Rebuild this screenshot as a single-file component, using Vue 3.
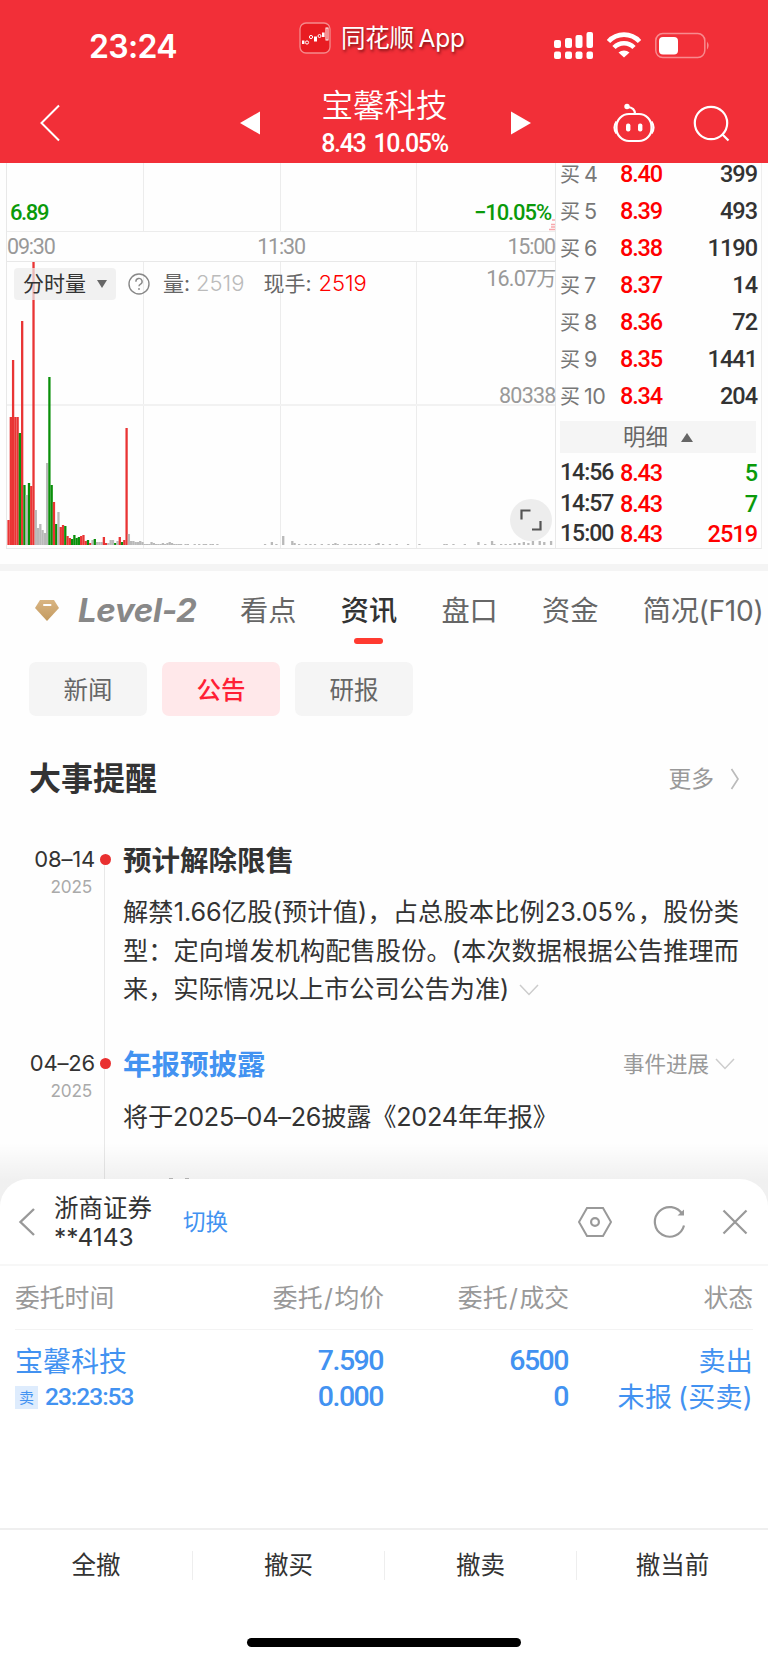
<script setup>
const bids = [
  { level: 4, price: '8.40', qty: 399 },
  { level: 5, price: '8.39', qty: 493 },
  { level: 6, price: '8.38', qty: 1190 },
  { level: 7, price: '8.37', qty: 14 },
  { level: 8, price: '8.36', qty: 72 },
  { level: 9, price: '8.35', qty: 1441 },
  { level: 10, price: '8.34', qty: 204 },
]

const ticks = [
  { time: '14:56', price: '8.43', qty: 5, side: 'down' },
  { time: '14:57', price: '8.43', qty: 7, side: 'down' },
  { time: '15:00', price: '8.43', qty: 2519, side: 'up' },
]

// minute volume: colour letter (r / g / n) + bar height
const head = (
  'r25 r128 r185 r128 r128 g112 r224 g60 n50 g62 r59 r283 n35 n17 n21 n15 n12 n82 g168 g60 ' +
  'r43 g21 n33 r18 r20 g19 r9 r7 g6 g10 g7 g8 r9 r10 r4 g5 r2 n5 g6 n3 n3 n3 r8 r2 n2 n5 n5 ' +
  'g2 n4 r8 g3 r5 r117 n11 n4 n4 n3 n3 n4 n3 n1 n1 n1 n3 n2 n1 n1 n1 n2 n1 n2 n3 n2 n1 n1 n1 n1 ' +
  'n0 n1 n1 n0 n0 n1 n0 n1 n0 n1 n1 n0 n1 n1 n0 n1'
).split(' ').map((s, i) => ({ i, c: s[0], h: +s.slice(1) }))
const tail = [
  [113, 1], [116, 3], [118, 1], [121, 9], [125, 4], [126, 2], [128, 1], [131, 1], [133, 1], [135, 1], [138, 1],
  [141, 1], [143, 1], [144, 2], [145, 1], [148, 1], [150, 1], [151, 1], [153, 1], [155, 1], [157, 1], [159, 1],
  [162, 1], [163, 2], [165, 1], [168, 1], [171, 1], [176, 1], [181, 1], [192, 1], [193, 1], [196, 1], [201, 1],
  [207, 3], [210, 1], [213, 4], [214, 1], [217, 1], [219, 1], [221, 1], [223, 2], [225, 2], [227, 3], [229, 2],
  [231, 4], [234, 4], [236, 3], [239, 4],
].map(([i, h]) => ({ i, c: 'n', h }))
const bars = [...head, ...tail]
const barColor = { r: '#e93434', g: '#0a8f0a', n: '#b9b9b9' }

const tabs = ['看点', '资讯', '盘口', '资金', '简况(F10)']
const pills = ['新闻', '公告', '研报']
const actions = ['全撤', '撤买', '撤卖', '撤当前']
</script>

<template>
  <div class="screen">
    <header class="header">
      <div class="status">
        <span class="clock">23:24</span>
        <div class="app">
          <svg class="app-icon" width="32" height="32" viewBox="0 0 32 32">
            <rect x="1" y="1" width="30" height="30" rx="6" fill="#e81c22" stroke="#f58a8c" stroke-width="1.3" />
            <g fill="#fff">
              <rect x="3" y="18.5" width="2.4" height="3.5" />
              <rect x="15" y="14.5" width="3" height="5" />
              <rect x="23" y="10.5" width="2.6" height="4.5" />
            </g>
            <g fill="none" stroke="#fff" stroke-width="1">
              <circle cx="8" cy="20.5" r="1.6" />
              <circle cx="12" cy="15" r="1.6" />
              <circle cx="20.5" cy="14" r="1.5" />
              <rect x="27" y="6" width="2" height="12" />
            </g>
          </svg>
          <span class="app-name">同花顺 App</span>
        </div>
        <svg class="sys" width="160" height="30" viewBox="0 0 160 30">
          <g fill="#fff">
            <rect x="3" y="10" width="7" height="8" rx="2" />
            <rect x="14" y="8" width="7" height="10" rx="2" />
            <rect x="24.500" y="5" width="7" height="13" rx="2" />
            <rect x="35.500" y="2" width="6.500" height="16" rx="2" />
            <rect x="3" y="21.500" width="7" height="7.500" rx="2" />
            <rect x="14" y="21.500" width="7" height="7.500" rx="2" />
            <rect x="24.500" y="21.500" width="7" height="7.500" rx="2" />
            <rect x="35.500" y="21.500" width="6.500" height="7.500" rx="2" />
          </g>
          <g fill="none" stroke="#fff" stroke-width="4.600">
            <path d="M57.500 11.500 A21 21 0 0 1 88.500 11.500" />
            <path d="M63 17.500 A14 14 0 0 1 83 17.500" />
          </g>
          <path d="M67.500 22.500 A8.500 8.500 0 0 1 78.500 22.500 L73 27.500 Z" fill="#fff" />
          <rect x="104.800" y="3.600" width="49" height="24" rx="7" fill="none" stroke="#f88a8e" stroke-width="1.500" />
          <rect x="108" y="7" width="19" height="17.500" rx="4" fill="#fff" />
          <path d="M156 11.500 q3.200 4 0 8 z" fill="#f88a8e" />
        </svg>
      </div>
      <div class="nav">
        <svg class="nav-back" width="22" height="38" viewBox="0 0 22 38">
          <path d="M20 1.500 L2.500 19 L20 36.500" fill="none" stroke="#fff" stroke-width="2" />
        </svg>
        <svg class="nav-prev" width="20" height="24" viewBox="0 0 20 24"><path d="M0 12 L20 0.500 V23.500 Z" fill="#fff" /></svg>
        <div class="nav-title">
          <div class="stock-name">宝馨科技</div>
          <div class="stock-price num">8.43 10.05%</div>
        </div>
        <svg class="nav-next" width="20" height="24" viewBox="0 0 20 24"><path d="M20 12 L0 0.500 V23.500 Z" fill="#fff" /></svg>
        <svg class="nav-bot" width="42" height="40" viewBox="0 0 42 40">
          <g fill="none" stroke="#fff" stroke-width="2.200">
            <rect x="3.500" y="11" width="35" height="27" rx="12.500" />
            <path d="M3.500 18.500 Q-0.500 24.500 3.500 30.500 M38.500 18.500 Q42.500 24.500 38.500 30.500" />
            <path d="M22 11 Q22 4.500 14.500 4" />
          </g>
          <circle cx="14" cy="3.500" r="2.700" fill="#fff" />
          <rect x="13" y="20.500" width="4.400" height="8" rx="2" fill="#fff" />
          <rect x="25" y="20.500" width="4.400" height="8" rx="2" fill="#fff" />
        </svg>
        <svg class="nav-search" width="38" height="38" viewBox="0 0 38 38">
          <circle cx="18" cy="18" r="16.200" fill="none" stroke="#fff" stroke-width="2.200" />
          <path d="M29 29 L35.500 35.500" stroke="#fff" stroke-width="2.200" />
        </svg>
      </div>
    </header>

    <section class="quote">
      <div class="chart">
        <div class="price-pane">
          <div class="cols"><i /><i /><i /><i /></div>
          <div class="pane-row num">
            <span>6.89</span>
            <span class="pct">−10.05%</span>
          </div>
          <svg class="edge" width="6" height="12" viewBox="0 0 6 12">
            <path d="M3 1H6 M2 5.500H6 M2 8H6 M0 10.500H6" stroke="#f7a8ac" stroke-width="1.300" />
          </svg>
        </div>
        <div class="axis num"><span>09:30</span><span>11:30</span><span>15:00</span></div>
        <div class="vol-pane">
          <div class="cols"><i /><i /><i /><i /></div>
          <div class="mid" />
          <svg class="bars" width="547" height="284" viewBox="0 0 547 284">
            <rect
              v-for="b in bars"
              :key="b.i"
              :x="0.4 + b.i * 2.27"
              :y="284 - b.h"
              width="2.3"
              :height="b.h"
              :fill="barColor[b.c]"
            />
          </svg>
          <div class="vol-head">
            <div class="vol-select">分时量<i class="caret-down" /></div>
            <svg class="help" width="22" height="22" viewBox="0 0 22 22">
              <circle cx="11" cy="11" r="10" fill="none" stroke="#888" stroke-width="1.400" />
              <path d="M7.900 8.700 A3.100 3.100 0 1 1 12.300 11.300 Q11 12 11 13.300" fill="none" stroke="#888" stroke-width="1.400" />
              <circle cx="11" cy="16" r="0.900" fill="#888" />
            </svg>
            <span class="vol-item">量: <em class="muted">2519</em></span>
            <span class="vol-item now">现手: <em class="red">2519</em></span>
          </div>
          <span class="scale-top num">16.07<b>万</b></span>
          <span class="scale-mid num">80338</span>
          <div class="expand">
            <svg width="22" height="22" viewBox="0 0 22 22">
              <path d="M1.500 10.500 V1.500 H10.500 M20.500 12 V20.500 H12" fill="none" stroke="#555" stroke-width="2.200" />
            </svg>
          </div>
        </div>
      </div>
      <div class="book">
        <div v-for="b in bids" :key="b.level" class="bid">
          <span class="bid-label">买<span>{{ b.level }}</span></span>
          <span class="bid-price num">{{ b.price }}</span>
          <span class="bid-qty num">{{ b.qty }}</span>
        </div>
        <div class="detail-head">明细<i class="caret-up" /></div>
        <div v-for="t in ticks" :key="t.time" class="tick num">
          <span class="tick-time">{{ t.time }}</span>
          <span class="bid-price">{{ t.price }}</span>
          <span class="bid-qty" :class="t.side">{{ t.qty }}</span>
        </div>
      </div>
    </section>

    <nav class="tabs">
      <svg class="gem" width="24" height="23" viewBox="0 0 24 23">
        <defs>
          <linearGradient id="gold" x1="0" y1="0" x2="0" y2="1">
            <stop offset="0" stop-color="#d9b583" /><stop offset="1" stop-color="#c39a5f" />
          </linearGradient>
        </defs>
        <path d="M5 1 H19 L24 9 L12 22 L0 9 Z" fill="url(#gold)" />
        <rect x="8" y="5" width="8.500" height="2" rx="1" fill="#fff" />
      </svg>
      <span class="level2">Level-2</span>
      <span v-for="t in tabs" :key="t" class="tab" :class="{ active: t === '资讯' }">{{ t }}</span>
    </nav>

    <div class="pills">
      <span v-for="p in pills" :key="p" class="pill" :class="{ active: p === '公告' }">{{ p }}</span>
    </div>

    <div class="section-head">
      <h2>大事提醒</h2>
      <span class="more">更多
        <svg width="10" height="22" viewBox="0 0 10 22"><path d="M1.500 1 L8 11 L1.500 21" fill="none" stroke="#bbb" stroke-width="1.700" /></svg>
      </span>
    </div>

    <section class="timeline">
      <article class="event first">
        <div class="when"><div class="day">08–14</div><div class="year">2025</div></div>
        <div class="rail"><i class="dot" /></div>
        <div class="what">
          <div class="event-head"><h3>预计解除限售</h3></div>
          <p class="full">解禁1.66亿股(预计值)，占总股本比例23.05%，股份类</p>
          <p class="full">型：定向增发机构配售股份。(本次数据根据公告推理而</p>
          <p>来，实际情况以上市公司公告为准)<svg class="chev" width="20" height="12" viewBox="0 0 20 12"><path d="M1 1 L10 10.500 L19 1" fill="none" stroke="#ccc" stroke-width="1.500" /></svg></p>
        </div>
      </article>
      <article class="event">
        <div class="when"><div class="day">04–26</div><div class="year">2025</div></div>
        <div class="rail"><i class="dot" /></div>
        <div class="what">
          <div class="event-head">
            <h3 class="link">年报预披露</h3>
            <span class="progress">事件进展<svg width="20" height="12" viewBox="0 0 20 12"><path d="M1 1 L10 10.500 L19 1" fill="none" stroke="#ccc" stroke-width="1.500" /></svg></span>
          </div>
          <p class="tight">将于2025–04–26披露《2024年年报》</p>
          <div class="peek"><i /><i /></div>
        </div>
      </article>
      <div class="fade" />
    </section>

    <section class="sheet">
      <div class="sheet-head">
        <svg width="18" height="30" viewBox="0 0 18 30"><path d="M16 2 L2.500 15 L16 28" fill="none" stroke="#999" stroke-width="2.400" /></svg>
        <div class="broker"><div>浙商证券</div><div>**4143</div></div>
        <span class="switch">切换</span>
        <div class="tools">
          <svg width="34" height="32" viewBox="0 0 34 32">
            <path d="M9 2 H25 L33 16 L25 30 H9 L1 16 Z" fill="none" stroke="#999" stroke-width="2" />
            <circle cx="17" cy="16" r="3.900" fill="none" stroke="#999" stroke-width="2.200" />
          </svg>
          <svg width="34" height="34" viewBox="0 0 34 34">
            <path d="M31 20.500 A14.800 14.800 0 1 1 29.500 9.500" fill="none" stroke="#999" stroke-width="2.200" />
            <path d="M31 4.500 V10.500 H24.500 Z" fill="#999" />
          </svg>
          <svg width="26" height="26" viewBox="0 0 26 26"><path d="M1.500 1.500 L24.500 24.500 M24.500 1.500 L1.500 24.500" stroke="#999" stroke-width="2.200" /></svg>
        </div>
      </div>
      <div class="orders">
        <div class="order-row order-head"><span>委托时间</span><span>委托<i>/</i>均价</span><span>委托<i>/</i>成交</span><span>状态</span></div>
        <div class="order-row order">
          <div>
            <div class="name">宝馨科技</div>
            <div class="sub"><span class="badge">卖</span><span class="time num">23:23:53</span></div>
          </div>
          <div class="num big"><div>7.590</div><div>0.000</div></div>
          <div class="num big"><div>6500</div><div>0</div></div>
          <div class="state"><div>卖出</div><div>未报 (买卖)</div></div>
        </div>
      </div>
      <div class="actions">
        <span v-for="a in actions" :key="a">{{ a }}</span>
      </div>
      <div class="home" />
    </section>
  </div>
</template>

<style>
body {
  margin: 0;
  background: #fefefe;
}
</style>

<style scoped>
.screen {
  width: 768px;
  height: 1662px;
  overflow: hidden;
  display: flex;
  flex-direction: column;
  background: #fefefe;
  color: #333;
  font-family: Inter, "Noto Sans CJK SC", sans-serif;
  font-size: 24px;
}
.screen * {
  box-sizing: border-box;
}
svg {
  display: block;
  flex-shrink: 0;
}
.num {
  font-family: Roboto, "Noto Sans CJK SC", sans-serif;
  font-weight: 500;
}

/* header */
.header {
  height: 163px;
  flex-shrink: 0;
  background: #f22f38;
  color: #fff;
}
.status {
  height: 80px;
  display: flex;
}
.clock {
  width: 299px;
  padding: 27px 0 0 89px;
  font-size: 32px;
  line-height: 40px;
  font-weight: 600;
  letter-spacing: -0.7px;
}
.app {
  display: flex;
  margin-top: 22px;
  height: 32px;
  width: 252px;
  gap: 10px;
}
.app-name {
  font-size: 24.500px;
  line-height: 33px;
  letter-spacing: -0.2px;
  word-spacing: -2px;
  text-shadow: 1px 2px 3px rgba(60, 0, 0, 0.65);
  white-space: nowrap;
}
.sys {
  margin-top: 30px;
}
.nav {
  height: 83px;
  display: flex;
  align-items: flex-start;
}
.nav-back {
  margin: 24px 0 0 39px;
}
.nav-prev {
  margin: 31px 0 0 179px;
}
.nav-title {
  width: 251px;
  padding-right: 2px;
  text-align: center;
  white-space: nowrap;
}
.stock-name {
  margin-top: 6px;
  font-size: 31.500px;
  line-height: 40px;
  font-weight: 350;
}
.stock-price {
  font-size: 25px;
  line-height: 36px;
  letter-spacing: -1.3px;
  word-spacing: 3px;
}
.nav-next {
  margin-top: 31px;
}
.nav-bot {
  margin: 23px 0 0 82px;
}
.nav-search {
  margin: 25px 0 0 38px;
}

/* quote */
.quote {
  height: 408px;
  flex-shrink: 0;
  display: flex;
  padding-left: 6px;
  border-bottom: 7px solid #f4f4f4;
}
.chart {
  width: 550px;
  height: 386px;
  border-left: 1px solid #e8e8e8;
  border-right: 1px solid #e8e8e8;
}
.price-pane {
  position: relative;
  height: 69px;
  border-bottom: 1px solid #ececec;
}
.cols {
  position: absolute;
  inset: 0;
  display: grid;
  grid-template-columns: 136px 137px 136px 1fr;
}
.cols i + i {
  border-left: 1px solid #ececec;
}
.pane-row {
  position: relative;
  display: flex;
  justify-content: space-between;
  padding: 34px 4px 0 3px;
  font-size: 22px;
  line-height: 31px;
  letter-spacing: -1.4px;
  color: #0a9a0a;
}
.pct {
  letter-spacing: -1.1px;
}
.edge {
  position: absolute;
  right: 0;
  bottom: 0;
}
.axis {
  height: 29px;
  display: flex;
  justify-content: space-between;
  font-size: 21.500px;
  font-weight: 400;
  line-height: 30px;
  letter-spacing: -1.2px;
  color: #999;
}
.vol-pane {
  position: relative;
  height: 288px;
  border-top: 1px solid #e8e8e8;
  border-bottom: 1px solid #e8e8e8;
}
.mid {
  position: absolute;
  left: 0;
  right: 0;
  top: 142px;
  height: 2px;
  background: #f2f2f2;
}
.bars {
  position: absolute;
  left: 0;
  top: -1px;
}
.vol-head {
  position: relative;
  display: flex;
  align-items: center;
  padding: 6px 0 0 7px;
  height: 38px;
}
.vol-select {
  width: 102px;
  height: 32px;
  padding-left: 9px;
  display: flex;
  align-items: center;
  border-radius: 4px;
  background: rgba(236, 236, 236, 0.72);
  font-size: 21px;
  line-height: 30px;
}
.caret-down {
  margin-left: 11px;
  border: 5.500px solid transparent;
  border-top: 8px solid #666;
  border-bottom: 0;
}
.help {
  margin: 0 13px 0 12px;
}
.vol-item {
  margin-top: -2px;
  font-size: 21px;
  line-height: 30px;
  color: #666;
  white-space: nowrap;
}
.vol-item em {
  font-size: 22px;
  font-style: normal;
  font-weight: 350;
}
.now {
  margin-left: 19px;
}
.now em {
  margin-left: 1px;
}
.muted {
  color: #bbb;
}
.red {
  color: #f00;
}
.scale-top,
.scale-mid {
  position: absolute;
  right: -0.500px;
  font-size: 21.500px;
  font-weight: 400;
  letter-spacing: -0.8px;
  line-height: 26px;
  color: #999;
}
.scale-top b {
  font-weight: 400;
  font-size: 20px;
}
.scale-top {
  top: 4px;
}
.scale-mid {
  top: 121px;
}
.expand {
  position: absolute;
  right: 3px;
  top: 237px;
  width: 42px;
  height: 42px;
  display: flex;
  align-items: center;
  justify-content: center;
  border-radius: 50%;
  background: #ededed;
}
.book {
  width: 206px;
  height: 386px;
  padding: 0 5px 0 4px;
  border-right: 1px solid #eee;
  border-bottom: 1px solid #e8e8e8;
}
.bid {
  height: 37px;
  line-height: 37px;
  display: flex;
  white-space: nowrap;
}
.bid:first-child {
  margin-top: -7px;
}
.bid-label {
  width: 60px;
  color: #777;
  font-size: 20px;
}
.bid-label span {
  margin-left: 4px;
  font-size: 21.500px;
  letter-spacing: -0.5px;
}
.bid-price {
  width: 60px;
  font-size: 23.500px;
  letter-spacing: -1.2px;
  color: #f00;
}
.bid-qty {
  flex: 1;
  margin-right: -1px;
  text-align: right;
  font-size: 23.500px;
  letter-spacing: -1px;
}
.bid-qty.down {
  color: #0a9a0a;
}
.bid-qty.up {
  color: #f00;
}
.detail-head {
  height: 32px;
  margin: 6px 0 4px;
  display: flex;
  align-items: center;
  justify-content: center;
  gap: 13px;
  background: #f5f5f5;
  color: #666;
  font-size: 22.500px;
  line-height: 32px;
}
.caret-up {
  border: 6px solid transparent;
  border-bottom: 9px solid #666;
  border-top: 0;
}
.tick {
  height: 30.500px;
  line-height: 32px;
  display: flex;
}
.tick-time {
  width: 60px;
  font-size: 23px;
  letter-spacing: -1px;
}

/* tabs */
.tabs {
  height: 91px;
  flex-shrink: 0;
  display: flex;
  padding-left: 35px;
  white-space: nowrap;
}
.gem {
  margin: 28px 19px 0 0;
}
.level2 {
  width: 162px;
  font-size: 33px;
  line-height: 79px;
  font-weight: 700;
  font-style: italic;
  letter-spacing: -0.3px;
  color: #888;
}
.tab {
  margin-right: 44.300px;
  font-size: 28.200px;
  line-height: 80px;
  color: #666;
}
.tab:last-child {
  margin-right: 0;
  letter-spacing: -0.3px;
}
.tab.active {
  position: relative;
  color: #333;
  font-weight: 500;
}
.tab.active::after {
  content: "";
  position: absolute;
  left: 50%;
  top: 67px;
  width: 29px;
  height: 6px;
  margin-left: -14.500px;
  border-radius: 3px;
  background: #ff3a30;
}
.pills {
  flex-shrink: 0;
  display: flex;
  gap: 15px;
  padding-left: 29px;
}
.pill {
  width: 118px;
  height: 54px;
  line-height: 56px;
  text-align: center;
  font-size: 24.500px;
  color: #666;
  background: #f5f5f5;
  border-radius: 7px;
}
.pill.active {
  color: #ff1f35;
  background: #ffe8ea;
  font-weight: 500;
}
.section-head {
  height: 124px;
  flex-shrink: 0;
  display: flex;
  justify-content: space-between;
  align-items: center;
  padding: 1px 28px 0 29px;
}
.section-head h2 {
  margin: 0;
  font-size: 32px;
  line-height: 44px;
  font-weight: 700;
}
.more {
  display: flex;
  align-items: center;
  gap: 16px;
  font-size: 22.800px;
  line-height: 30px;
  color: #999;
}

/* timeline */
.timeline {
  position: relative;
  height: 339px;
  flex-shrink: 0;
}
.event {
  display: flex;
  height: 135px;
}
.event.first {
  height: 204px;
}
.when {
  width: 95px;
  text-align: right;
}
.day {
  font-size: 22px;
  line-height: 39px;
  letter-spacing: -0.2px;
}
.year {
  padding-right: 3px;
  font-size: 17.200px;
  line-height: 15px;
  letter-spacing: -0.2px;
  color: #aaa;
}
.rail {
  width: 21px;
  padding-top: 14px;
  background: linear-gradient(#e8e8e8, #e8e8e8) 9px 0 / 1px 100% no-repeat;
}
.first .rail {
  background-position: 9px 20px;
}
.dot {
  display: block;
  width: 11px;
  height: 11px;
  margin-left: 5px;
  border-radius: 50%;
  background: #e93030;
}
.what {
  width: 623px;
  padding-left: 7px;
}
.event-head {
  display: flex;
  justify-content: space-between;
  height: 52px;
  margin-bottom: 1px;
  line-height: 42px;
}
.event h3 {
  margin: 0;
  font-size: 28.500px;
  font-weight: 700;
}
.event h3.link {
  color: #4292f1;
}
.event p {
  margin: 0;
  height: 38.500px;
  display: block;
  font-size: 25.200px;
  line-height: 38.500px;
  white-space: nowrap;
  letter-spacing: -0.05px;
}
.event p.full {
  text-align: justify;
  text-align-last: justify;
}
.event p.tight {
  letter-spacing: -0.2px;
  line-height: 40px;
}
.chev {
  display: inline-block;
  margin-left: 10px;
  vertical-align: 2px;
}
.progress {
  display: flex;
  align-items: center;
  gap: 6px;
  height: 40px;
  margin-right: 4px;
  font-size: 21.500px;
  color: #999;
}
.peek {
  display: flex;
  gap: 12px;
  margin: 42px 0 0 46px;
}
.peek i {
  width: 4px;
  height: 2px;
  background: #bbb;
}
.fade {
  position: absolute;
  left: 0;
  right: 0;
  bottom: -30px;
  height: 66px;
  background: linear-gradient(rgba(0, 0, 0, 0), rgba(0, 0, 0, 0.055) 55%);
}

/* order sheet */
.sheet {
  position: relative;
  flex: 1;
  display: flex;
  flex-direction: column;
  background: #fff;
  border-radius: 28px 28px 0 0;
}
.sheet-head {
  height: 87px;
  display: flex;
  align-items: center;
  padding: 0 20px 0 18px;
  border-bottom: 2px solid #f7f7f7;
}
.broker {
  width: 129px;
  margin-left: 18px;
  padding-top: 2px;
  font-size: 24.500px;
  line-height: 29px;
}
.switch {
  font-size: 22.500px;
  line-height: 30px;
  margin-top: 1px;
  color: #4292f1;
}
.tools {
  margin-left: auto;
  display: flex;
  align-items: center;
}
.tools svg:nth-child(2) {
  margin: 0 35px 0 41px;
}
.orders {
  height: 262px;
  padding: 0 15px;
}
.order-row {
  display: grid;
  grid-template-columns: 168px 201px 185px 184px;
  justify-content: start;
  white-space: nowrap;
}
.order-row > :not(:first-child) {
  text-align: right;
}
.order-head {
  height: 64px;
  line-height: 65px;
  font-size: 24.800px;
  color: #999;
  border-bottom: 1px solid #f3f3f3;
}
.order-head i {
  padding: 0 1.500px;
  font-style: normal;
}
.order {
  padding-top: 14px;
  color: #4292f1;
  line-height: 36px;
}
.name {
  font-size: 28px;
}
.sub {
  display: flex;
  align-items: center;
  gap: 7px;
  height: 34px;
}
.badge {
  width: 23px;
  height: 23px;
  line-height: 23px;
  text-align: center;
  font-size: 15px;
  background: #deecfd;
}
.time {
  font-size: 24.500px;
  letter-spacing: -1px;
}
.big {
  margin-top: -1px;
  padding-right: 1px;
  font-size: 28.500px;
  letter-spacing: -1.5px;
}
.state {
  font-size: 27px;
  word-spacing: -2px;
  letter-spacing: 0.3px;
}
.actions {
  height: 72px;
  display: grid;
  grid-template-columns: repeat(4, 1fr);
  align-items: center;
  border-top: 2px solid #efefef;
}
.actions span {
  height: 29px;
  line-height: 29px;
  text-align: center;
  font-size: 24.500px;
}
.actions span + span {
  border-left: 1px solid #eee;
}
.home {
  width: 274px;
  height: 9px;
  margin: 38px auto 0;
  border-radius: 5px;
  background: #000;
}
</style>
